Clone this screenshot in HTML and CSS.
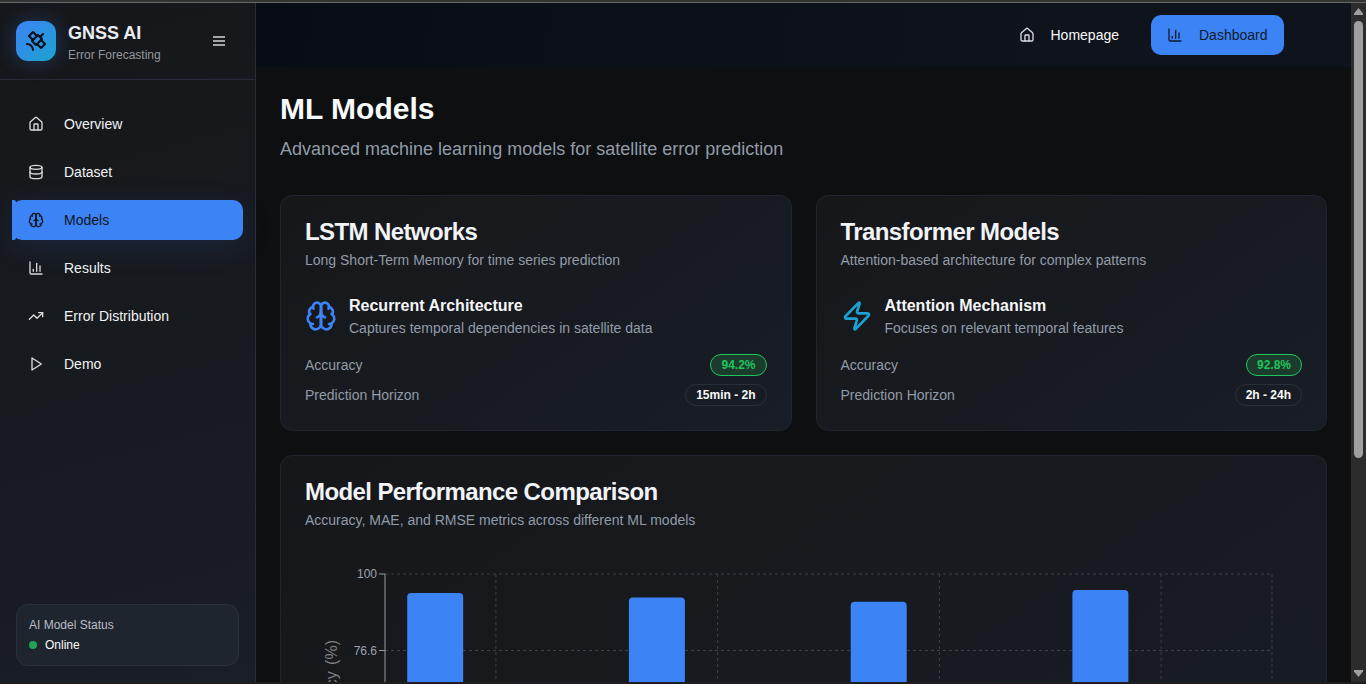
FILE: index.html
```html
<!DOCTYPE html>
<html lang="en">
<head>
<meta charset="utf-8">
<title>GNSS AI - ML Models</title>
<link rel="stylesheet" href="styles.css">
</head>
<body>
<svg class="defs" width="0" height="0">
  <symbol id="house" viewBox="0 0 24 24"><path d="M15 21v-8a1 1 0 0 0-1-1h-4a1 1 0 0 0-1 1v8"/><path d="M3 10a2 2 0 0 1 .709-1.528l7-5.999a2 2 0 0 1 2.582 0l7 5.999A2 2 0 0 1 21 10v9a2 2 0 0 1-2 2H5a2 2 0 0 1-2-2z"/></symbol>
  <symbol id="database" viewBox="0 0 24 24"><ellipse cx="12" cy="5" rx="9" ry="3"/><path d="M3 5V19A9 3 0 0 0 21 19V5"/><path d="M3 12A9 3 0 0 0 21 12"/></symbol>
  <symbol id="brain" viewBox="0 0 24 24"><path d="M12 5a3 3 0 1 0-5.997.125 4 4 0 0 0-2.526 5.77 4 4 0 0 0 .556 6.588A4 4 0 1 0 12 18Z"/><path d="M12 5a3 3 0 1 1 5.997.125 4 4 0 0 1 2.526 5.77 4 4 0 0 1-.556 6.588A4 4 0 1 1 12 18Z"/><path d="M15 13a4.5 4.5 0 0 1-3-4 4.5 4.5 0 0 1-3 4"/><path d="M17.599 6.5a3 3 0 0 0 .399-1.375"/><path d="M6.003 5.125A3 3 0 0 0 6.401 6.5"/><path d="M3.477 10.896a4 4 0 0 1 .585-.396"/><path d="M19.938 10.5a4 4 0 0 1 .585.396"/><path d="M6 18a4 4 0 0 1-1.967-.516"/><path d="M19.967 17.484A4 4 0 0 1 18 18"/></symbol>
  <symbol id="chart" viewBox="0 0 24 24"><path d="M3 3v16a2 2 0 0 0 2 2h16"/><path d="M18 17V9"/><path d="M13 17V5"/><path d="M8 17v-3"/></symbol>
  <symbol id="trend" viewBox="0 0 24 24"><polyline points="22 7 13.5 15.5 8.5 10.5 2 17"/><polyline points="16 7 22 7 22 13"/></symbol>
  <symbol id="play" viewBox="0 0 24 24"><polygon points="6 3 20 12 6 21 6 3"/></symbol>
  <symbol id="satellite" viewBox="0 0 24 24"><path d="M13 7 9 3 5 7l4 4"/><path d="m17 11 4 4-4 4-4-4"/><path d="m8 12 4 4 6-6-4-4Z"/><path d="m16 8 3-3"/><path d="M9 21a6 6 0 0 0-6-6"/></symbol>
  <symbol id="zap" viewBox="0 0 24 24"><path d="M4 14a1 1 0 0 1-.78-1.63l9.9-10.2a.5.5 0 0 1 .86.46l-1.92 6.02A1 1 0 0 0 13 10h7a1 1 0 0 1 .78 1.63l-9.9 10.2a.5.5 0 0 1-.86-.46l1.92-6.02A1 1 0 0 0 11 14z"/></symbol>
</svg>
<div class="frame">
  <div class="frame-top"></div>
  <div class="app">
    <aside class="sidebar">
      <header class="brand">
        <div class="brand-logo"><svg class="icon icon-brand"><use href="#satellite"/></svg></div>
        <div class="brand-text">
          <div class="brand-name">GNSS AI</div>
          <div class="brand-sub">Error Forecasting</div>
        </div>
        <button class="menu-btn" aria-label="Toggle menu"><span></span><span></span><span></span></button>
      </header>
      <nav class="nav">
        <a class="nav-item"><svg class="icon"><use href="#house"/></svg>Overview</a>
        <a class="nav-item"><svg class="icon"><use href="#database"/></svg>Dataset</a>
        <a class="nav-item active"><svg class="icon"><use href="#brain"/></svg>Models</a>
        <a class="nav-item"><svg class="icon"><use href="#chart"/></svg>Results</a>
        <a class="nav-item"><svg class="icon"><use href="#trend"/></svg>Error Distribution</a>
        <a class="nav-item"><svg class="icon"><use href="#play"/></svg>Demo</a>
      </nav>
      <div class="status">
        <div class="status-label">AI Model Status</div>
        <div class="status-value"><span class="dot"></span>Online</div>
      </div>
    </aside>
    <main class="main">
      <div class="topbar">
        <a class="top-btn"><svg class="icon"><use href="#house"/></svg>Homepage</a>
        <a class="top-btn primary"><svg class="icon"><use href="#chart"/></svg>Dashboard</a>
      </div>
      <div class="content">
        <h1 class="page-title">ML Models</h1>
        <p class="page-sub">Advanced machine learning models for satellite error prediction</p>
        <div class="cards">
          <section class="card">
            <h2 class="card-title">LSTM Networks</h2>
            <p class="card-desc">Long Short-Term Memory for time series prediction</p>
            <div class="feature">
              <svg class="icon icon-lg blue"><use href="#brain"/></svg>
              <div><h3 class="feature-title">Recurrent Architecture</h3><p class="muted">Captures temporal dependencies in satellite data</p></div>
            </div>
            <div class="metric"><span class="muted">Accuracy</span><span class="badge good">94.2%</span></div>
            <div class="metric"><span class="muted">Prediction Horizon</span><span class="badge">15min - 2h</span></div>
          </section>
          <section class="card">
            <h2 class="card-title">Transformer Models</h2>
            <p class="card-desc">Attention-based architecture for complex patterns</p>
            <div class="feature">
              <svg class="icon icon-lg cyan"><use href="#zap"/></svg>
              <div><h3 class="feature-title">Attention Mechanism</h3><p class="muted">Focuses on relevant temporal features</p></div>
            </div>
            <div class="metric"><span class="muted">Accuracy</span><span class="badge good">92.8%</span></div>
            <div class="metric"><span class="muted">Prediction Horizon</span><span class="badge">2h - 24h</span></div>
          </section>
        </div>
        <section class="card chart-card">
          <h2 class="card-title">Model Performance Comparison</h2>
          <p class="card-desc">Accuracy, MAE, and RMSE metrics across different ML models</p>
          <svg class="chart" width="997" height="400" viewBox="0 0 997 400">
            <g class="grid">
              <path d="M80 20H967M80 96.5H967"/>
              <path d="M190.9 20V350M412.6 20V350M634.4 20V350M856.1 20V350M967 20V350"/>
            </g>
            <path class="axis" d="M80 20V350M74 20H80M74 96.5H80"/>
            <g class="bars">
              <path d="M102.2 350V43a4 4 0 0 1 4-4h48a4 4 0 0 1 4 4V350z"/>
              <path d="M323.9 350V47.5a4 4 0 0 1 4-4h48a4 4 0 0 1 4 4V350z"/>
              <path d="M545.7 350V51.7a4 4 0 0 1 4-4h48a4 4 0 0 1 4 4V350z"/>
              <path d="M767.4 350V40a4 4 0 0 1 4-4h48a4 4 0 0 1 4 4V350z"/>
            </g>
            <text class="tick" x="72" y="24.3">100</text>
            <text class="tick" x="72" y="100.8">76.6</text>
            <text class="axis-label" transform="translate(31.5 86) rotate(-90)">Accuracy (%)</text>
          </svg>
        </section>
      </div>
    </main>
    <div class="scrollbar">
      <svg width="9" height="7" viewBox="0 0 9 7"><path d="M4.5 0 9 5.5V7H0V5.5z"/></svg>
      <div class="thumb"></div>
      <svg class="down" width="9" height="7" viewBox="0 0 9 7"><path d="M4.5 7 9 1.5V0H0V1.5z"/></svg>
    </div>
  </div>
  <div class="frame-bottom"></div>
</div>
</body>
</html>
```
FILE: styles.css
```css
* { box-sizing: border-box; margin: 0; }
body {
  background: #0d0f10;
  color: #f8fafc;
  font-family: "Liberation Sans", Arial, sans-serif;
  font-size: 14px;
  line-height: 20px;
  overflow: hidden;
}
.defs { position: absolute; }
.frame { display: flex; flex-direction: column; height: 684px; }
.frame-top { height: 3px; flex: none; background: #333; border-bottom: 1px solid #696969; }
.frame-bottom { height: 2px; flex: none; background: #1f1d1f; }
.app { display: flex; flex: 1; min-height: 0; }

.icon {
  width: 16px; height: 16px; flex: none;
  fill: none; stroke: currentColor; stroke-width: 2;
  stroke-linecap: round; stroke-linejoin: round;
}
.icon-brand { width: 24px; height: 24px; }
.icon-lg { width: 32px; height: 32px; }
.blue { color: #3c83f6; }
.cyan { color: #1ca2cf; }

.sidebar {
  width: 256px; flex: none;
  display: flex; flex-direction: column;
  background: linear-gradient(165deg, #16171b, #171a1f 50%, #181b25 80%, #191e27);
  border-right: 1px solid #272e3a;
}
.brand {
  display: flex; align-items: center;
  height: 77px; padding: 0 16px;
  border-bottom: 1px solid #272e3a;
}
.brand-logo {
  display: grid; place-items: center;
  width: 40px; height: 40px; border-radius: 12px;
  color: #0d0f14;
  background: linear-gradient(135deg, #3c83f6, #1ca2cf);
  box-shadow: 0 0 20px rgba(60, 131, 246, .3);
}
.brand-text { margin-left: 12px; flex: 1; }
.brand-name { font-size: 18px; line-height: 28px; font-weight: 700; color: #e8edf3; }
.brand-sub { font-size: 12px; line-height: 16px; color: #94979b; }
.menu-btn {
  display: flex; flex-direction: column; gap: 2px;
  width: 12px; padding: 0; margin-right: 14px;
  border: 0; background: none;
}
.menu-btn span { height: 2px; background: #a4a6aa; }
.nav { display: flex; flex-direction: column; gap: 8px; padding: 24px 12px; }
.nav-item {
  display: flex; align-items: center; gap: 20px;
  height: 40px; padding-left: 16px; border-radius: 10px;
  color: #f1f3f5;
}
.nav-item .icon { color: #d9dcdf; }
.nav-item.active {
  position: relative;
  background: #3c83f6; color: #101521;
  box-shadow: 0 8px 30px rgba(60, 131, 246, .14);
}
.nav-item.active::before {
  content: ""; position: absolute; left: 0; top: 0;
  width: 4px; height: 40px; background: #3c83f6;
  border-radius: 0 2px 2px 0;
}
.nav-item.active .icon { color: #101521; }
.status {
  margin: auto 16px 16px; height: 62px; padding: 12px;
  border: 1px solid #29313d; border-radius: 12px;
  background: #1f252e;
  font-size: 12px; line-height: 16px;
}
.status-label { color: #b9bdc4; }
.status-value { display: flex; align-items: center; gap: 8px; margin-top: 4px; }
.dot { width: 8px; height: 8px; border-radius: 50%; background: #21a453; }

.main { flex: 1; min-width: 0; overflow: hidden; }
.topbar {
  display: flex; justify-content: flex-end; align-items: center; gap: 16px;
  height: 64px; padding-right: 67px;
  background: linear-gradient(100deg, #080c15, #0f131b 75%, #0f141c);
}
.top-btn {
  display: flex; align-items: center; gap: 16px;
  height: 40px; padding: 0 16px; border-radius: 10px;
}
.top-btn .icon { color: #d9dcdf; }
.primary { width: 133px; background: #3c83f6; color: #111b2c; }
.primary .icon { color: #111b2c; }
.content { padding: 24px; }
.page-title { font-size: 30px; line-height: 36px; }
.page-sub { margin: 8px 0 32px; font-size: 18px; line-height: 28px; color: #929ba8; }
.cards { display: grid; grid-template-columns: 1fr 1fr; gap: 24px; }
.card {
  padding: 24px;
  border: 1px solid #20262f; border-radius: 12px;
  background: linear-gradient(145deg, #16171b, #171a1e 40%, #171b24 75%, #191e26);
}
.card-title { font-size: 24px; line-height: 24px; letter-spacing: -.6px; color: #f1f3f6; }
.card-desc { margin: 6px 0 24px; color: #929ba8; }
.muted { color: #929ba8; }
.feature { display: flex; align-items: center; gap: 12px; margin-bottom: 16px; }
.feature-title { font-size: 16px; line-height: 24px; color: #f5f6f8; }
.metric { display: flex; align-items: center; justify-content: space-between; height: 22px; }
.metric + .metric { margin-top: 8px; }
.badge {
  height: 22px; padding: 2px 10px;
  border: 1px solid #292f38; border-radius: 11px;
  font-size: 12px; line-height: 16px; font-weight: 700;
}
.good { color: #21c45d; background: #1b3b2d; border-color: #21c45d; }
.chart-card { margin-top: 24px; }
.chart { display: block; overflow: visible; }
.grid { stroke: #3b3f46; stroke-dasharray: 3 3; fill: none; }
.axis { stroke: #929ba8; fill: none; }
.bars { fill: #3c83f6; }
.tick { fill: #9ca3af; font-size: 12px; text-anchor: end; }
.axis-label { fill: #808080; font-size: 16px; text-anchor: end; word-spacing: 2px; }

.scrollbar {
  width: 15px; flex: none;
  display: flex; flex-direction: column; align-items: center;
  padding: 5px 0; background: #2c2c2c;
}
.scrollbar svg { fill: #9f9f9f; }
.thumb { width: 9px; height: 437px; margin-top: 6px; border-radius: 5px; background: #9f9f9f; }
.down { margin-top: auto; }
```
